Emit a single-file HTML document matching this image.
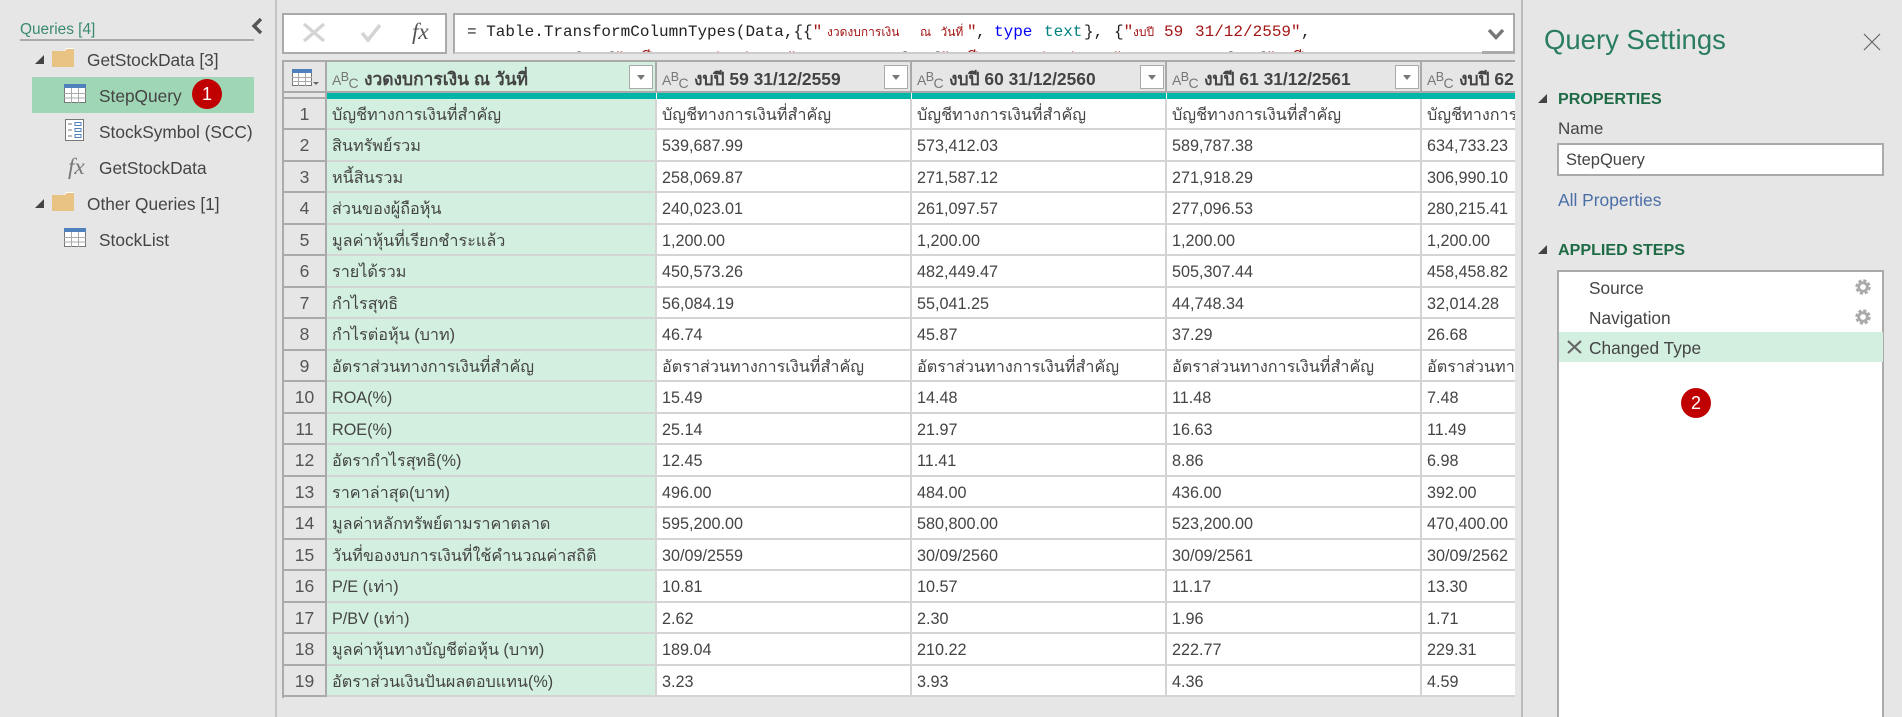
<!DOCTYPE html>
<html><head><meta charset="utf-8"><title>Query Editor</title>
<style>
*{box-sizing:border-box}
html,body{margin:0;padding:0;width:1902px;height:717px;overflow:hidden}
body{background:#e6e6e6;font-family:"Liberation Sans","Noto Sans CJK SC",sans-serif;color:#444}
#page{position:absolute;left:0;top:0;width:1902px;height:717px;overflow:hidden;background:#e6e6e6}
.a{position:absolute;white-space:nowrap}
.t{font-size:17.3px;line-height:22px}
svg{position:absolute;display:block}
.badge{position:absolute;width:30px;height:30px;border-radius:50%;background:#c00000;color:#fff;font-size:18px;line-height:30px;text-align:center}
#grid{position:absolute;left:282px;top:60px;width:1233px;height:638px;overflow:hidden}
.h{position:absolute;top:2px;height:31px;background:#e6e6e6;border-right:2px solid #aaa;font-weight:bold;font-size:17.4px;line-height:34px;white-space:nowrap;overflow:hidden;color:#444}
.abc{position:absolute;top:0;left:5px;font-weight:normal;color:#777;font-size:14px;line-height:36px;letter-spacing:-.6px}
.abc s{text-decoration:none;position:relative;top:-4px;font-size:12.5px}
.abc u{text-decoration:none;position:relative;top:3px;font-size:14px}
.lb{position:absolute;left:37px;top:0}
.fb{position:absolute;top:3px;width:24px;height:24px;background:#fff;border:1px solid #aaa}
.fb:after{content:"";position:absolute;left:7px;top:9px;border:4.5px solid transparent;border-top:5px solid #777;border-bottom:0}
.r{position:absolute;left:0;width:1233px;height:31.5px;font-size:16.2px;line-height:33px}
.r b,.r i{position:absolute;top:0;bottom:0;font-weight:normal;font-style:normal;white-space:nowrap;overflow:hidden;padding-left:5px;border-bottom:2px solid #d4d4d4;border-right:2px solid #d4d4d4;background:#fff}
.r b{left:0;width:45px;line-height:31px;background:#e6e6e6;border-bottom:2px solid #aaa;border-right:2px solid #aaa;border-left:2px solid #aaa;text-align:center;padding:0;font-size:17.5px;color:#555}
.r i:nth-child(2){left:45px;width:330px;background:#d3efe0}
.r i:nth-child(3){left:375px;width:255px}
.r i:nth-child(4){left:630px;width:255px}
.r i:nth-child(5){left:885px;width:255px}
.r i:nth-child(6){left:1140px;width:93px;border-right:0}
.m{position:absolute;font-family:"Liberation Mono","Noto Sans CJK SC",monospace;font-size:16px;line-height:20px;white-space:pre;color:#222}
.red{color:#a31515}.blu{color:#0000ff}.tea{color:#008080}
.sm{font-family:"Liberation Sans","Noto Sans CJK SC",sans-serif;font-size:12px}
</style></head><body><div id="page">

<!-- left panel -->
<div class="a" style="left:20px;top:19px;font-size:15.4px;line-height:22px;color:#3a8a70">Queries [4]</div>
<div class="a" style="left:20px;top:39px;width:234px;height:2px;background:#aaa"></div>
<svg style="left:250px;top:16px" width="14" height="20"><path d="M11 3L4 10l7 7" fill="none" stroke="#555" stroke-width="3.4"/></svg>

<svg style="left:34px;top:54px" width="11" height="11"><path d="M10 1V10H1Z" fill="#444"/></svg>
<svg style="left:52px;top:47px" width="23" height="21"><path d="M0 4H12L14 1H22V20H0Z" fill="#e8c384"/><path d="M12 4L14 1H22V2H14.6L13 4Z" fill="#fff"/></svg>
<div class="a t" style="left:87px;top:49px">GetStockData [3]</div>

<div class="a" style="left:32px;top:77px;width:222px;height:36px;background:#9fd6b5"></div>
<svg style="left:64px;top:84px" width="22" height="19"><rect x=".5" y=".5" width="21" height="18" fill="#fff" stroke="#777"/><rect width="22" height="4" fill="#4f81bd"/><path d="M0 9.5H22M0 14H22M7.5 4V19M14.5 4V19" stroke="#aaa" fill="none"/></svg>
<div class="a t" style="left:99px;top:85px">StepQuery</div>
<div class="badge" style="left:192px;top:79px">1</div>

<svg style="left:65px;top:119px" width="19" height="22"><rect x=".5" y=".5" width="18" height="21" fill="#fff" stroke="#777"/><path d="M3 5H7M3 11H7M3 17H7" stroke="#777"/><path d="M10 3.5h6v3h-6zM10 9.5h6v3h-6zM10 15.5h6v3h-6z" fill="#fff" stroke="#4f81bd"/></svg>
<div class="a t" style="left:99px;top:121px">StockSymbol (SCC)</div>

<div class="a" style="left:68px;top:153px;font-family:'Liberation Serif',serif;font-style:italic;font-size:23px;line-height:28px;color:#777">fx</div>
<div class="a t" style="left:99px;top:157px">GetStockData</div>

<svg style="left:34px;top:198px" width="11" height="11"><path d="M10 1V10H1Z" fill="#444"/></svg>
<svg style="left:52px;top:191px" width="23" height="21"><path d="M0 4H12L14 1H22V20H0Z" fill="#e8c384"/><path d="M12 4L14 1H22V2H14.6L13 4Z" fill="#fff"/></svg>
<div class="a t" style="left:87px;top:193px">Other Queries [1]</div>

<svg style="left:64px;top:228px" width="22" height="19"><rect x=".5" y=".5" width="21" height="18" fill="#fff" stroke="#777"/><rect width="22" height="4" fill="#4f81bd"/><path d="M0 9.5H22M0 14H22M7.5 4V19M14.5 4V19" stroke="#aaa" fill="none"/></svg>
<div class="a t" style="left:99px;top:229px">StockList</div>

<div class="a" style="left:275px;top:0;width:2px;height:717px;background:#c4c4c4"></div>
<div class="a" style="left:1521px;top:0;width:2px;height:717px;background:#bbb"></div>

<!-- formula bar -->
<div class="a" style="left:282px;top:13px;width:165px;height:41px;background:#fff;border:2px solid #aaa"></div>
<svg style="left:302px;top:22px" width="24" height="21"><path d="M2 2L22 19M22 2L2 19" stroke="#d4d4d4" stroke-width="3.4" fill="none"/></svg>
<svg style="left:360px;top:23px" width="22" height="19"><path d="M2 10L8 17L20 2" stroke="#d4d4d4" stroke-width="3.6" fill="none"/></svg>
<div class="a" style="left:412px;top:18px;font-family:'Liberation Serif',serif;font-style:italic;font-size:23px;line-height:28px;color:#555">fx</div>

<div class="a" style="left:453px;top:13px;width:1062px;height:41px;background:#fff;border:2px solid #aaa;border-bottom-color:#ccc;overflow:hidden">
 <span class="m" style="left:12px;top:7px">= Table.TransformColumnTypes(Data,{{<span class="red">"</span></span>
 <span class="m red sm" style="left:372px;top:7px">งวดงบการเงิน</span>
 <span class="m red sm" style="left:465px;top:7px;word-spacing:6px">ณ วันที่</span>
 <span class="m red" style="left:512px;top:7px">"</span><span class="m" style="left:521px;top:7px">,</span>
 <span class="m blu" style="left:539px;top:7px">type</span>
 <span class="m tea" style="left:589px;top:7px">text</span>
 <span class="m" style="left:629px;top:7px">},</span>
 <span class="m" style="left:659px;top:7px">{<span class="red">"</span></span>
 <span class="m red sm" style="left:678px;top:7px">งบปี</span>
 <span class="m red" style="left:709px;top:7px">59</span>
 <span class="m red" style="left:740px;top:7px">31/12/2559"</span><span class="m" style="left:846px;top:7px">,</span>
 <span class="m" style="left:35px;top:34px"><span class="blu">type</span> <span class="tea">text</span>}, {<span class="red">"งบปี 60 31/12/2560"</span>, <span class="blu">type</span> <span class="tea">text</span>}, {<span class="red">"งบปี 61 31/12/2561"</span>, <span class="blu">type</span> <span class="tea">text</span>}, {<span class="red">"งบปี 62</span></span>
</div>
<div class="a" style="left:1482px;top:15px;width:31px;height:37px;background:#fff"></div>
<svg style="left:1487px;top:28px" width="18" height="13"><path d="M2 2L9 9.5L16 2" stroke="#777" stroke-width="3.4" fill="none"/></svg>
<div class="a" style="left:1482px;top:51px;width:33px;height:3px;background:#aaa"></div>

<!-- grid -->
<div id="grid">
 <div class="a" style="left:0;top:0;width:1233px;height:2px;background:#aaa"></div>
 <div class="a" style="left:0;top:2px;width:2px;height:636px;background:#aaa"></div>
 <div class="a" style="left:2px;top:2px;width:43px;height:37px;background:#e6e6e6;border-right:2px solid #aaa"></div>
 <svg style="left:10px;top:9px" width="28" height="17"><rect x=".5" y=".5" width="19" height="16" fill="#fff" stroke="#777"/><rect width="20" height="4" fill="#4f81bd"/><path d="M0 8.5H20M0 12.5H20M6.5 4V17M13.5 4V17" stroke="#aaa" fill="none"/><path d="M21 13H27L24 16Z" fill="#666"/></svg>

 <div class="h" style="left:45px;width:330px;background:#d3efe0"><span class="abc">A<s>B</s><u>C</u></span><span class="lb">งวดงบการเงิน ณ วันที่</span><span class="fb" style="left:302px"></span></div>
 <div class="h" style="left:375px;width:255px"><span class="abc">A<s>B</s><u>C</u></span><span class="lb">งบปี 59 31/12/2559</span><span class="fb" style="left:227px"></span></div>
 <div class="h" style="left:630px;width:255px"><span class="abc">A<s>B</s><u>C</u></span><span class="lb">งบปี 60 31/12/2560</span><span class="fb" style="left:228px"></span></div>
 <div class="h" style="left:885px;width:255px"><span class="abc">A<s>B</s><u>C</u></span><span class="lb">งบปี 61 31/12/2561</span><span class="fb" style="left:228px"></span></div>
 <div class="h" style="left:1140px;width:93px;border-right:0"><span class="abc">A<s>B</s><u>C</u></span><span class="lb">งบปี 62 31/12/2562</span></div>
 <div class="a" style="left:0;top:31px;width:1233px;height:2px;background:#aaa"></div>
 <div class="a" style="left:45px;top:33px;width:1188px;height:6px;background:#00b6a8"></div>
 <div class="a" style="left:374px;top:33px;width:1px;height:6px;background:#fff"></div>
 <div class="a" style="left:629px;top:33px;width:1px;height:6px;background:#fff"></div>
 <div class="a" style="left:884px;top:33px;width:1px;height:6px;background:#fff"></div>
 <div class="a" style="left:2px;top:37px;width:42px;height:2px;background:#aaa"></div>

 <div class="r" style="top:39px;height:31px"><b>1</b><i>บัญชีทางการเงินที่สำคัญ</i><i>บัญชีทางการเงินที่สำคัญ</i><i>บัญชีทางการเงินที่สำคัญ</i><i>บัญชีทางการเงินที่สำคัญ</i><i>บัญชีทางการเงินที่สำคัญ</i></div>
 <div class="r" style="top:70px"><b>2</b><i>สินทรัพย์รวม</i><i>539,687.99</i><i>573,412.03</i><i>589,787.38</i><i>634,733.23</i></div>
 <div class="r" style="top:101.5px"><b>3</b><i>หนี้สินรวม</i><i>258,069.87</i><i>271,587.12</i><i>271,918.29</i><i>306,990.10</i></div>
 <div class="r" style="top:133px"><b>4</b><i>ส่วนของผู้ถือหุ้น</i><i>240,023.01</i><i>261,097.57</i><i>277,096.53</i><i>280,215.41</i></div>
 <div class="r" style="top:164.5px"><b>5</b><i>มูลค่าหุ้นที่เรียกชำระแล้ว</i><i>1,200.00</i><i>1,200.00</i><i>1,200.00</i><i>1,200.00</i></div>
 <div class="r" style="top:196px"><b>6</b><i>รายได้รวม</i><i>450,573.26</i><i>482,449.47</i><i>505,307.44</i><i>458,458.82</i></div>
 <div class="r" style="top:227.5px"><b>7</b><i>กำไรสุทธิ</i><i>56,084.19</i><i>55,041.25</i><i>44,748.34</i><i>32,014.28</i></div>
 <div class="r" style="top:259px"><b>8</b><i>กำไรต่อหุ้น (บาท)</i><i>46.74</i><i>45.87</i><i>37.29</i><i>26.68</i></div>
 <div class="r" style="top:290.5px"><b>9</b><i>อัตราส่วนทางการเงินที่สำคัญ</i><i>อัตราส่วนทางการเงินที่สำคัญ</i><i>อัตราส่วนทางการเงินที่สำคัญ</i><i>อัตราส่วนทางการเงินที่สำคัญ</i><i>อัตราส่วนทางการเงินที่สำคัญ</i></div>
 <div class="r" style="top:322px"><b>10</b><i>ROA(%)</i><i>15.49</i><i>14.48</i><i>11.48</i><i>7.48</i></div>
 <div class="r" style="top:353.5px"><b>11</b><i>ROE(%)</i><i>25.14</i><i>21.97</i><i>16.63</i><i>11.49</i></div>
 <div class="r" style="top:385px"><b>12</b><i>อัตรากำไรสุทธิ(%)</i><i>12.45</i><i>11.41</i><i>8.86</i><i>6.98</i></div>
 <div class="r" style="top:416.5px"><b>13</b><i>ราคาล่าสุด(บาท)</i><i>496.00</i><i>484.00</i><i>436.00</i><i>392.00</i></div>
 <div class="r" style="top:448px"><b>14</b><i>มูลค่าหลักทรัพย์ตามราคาตลาด</i><i>595,200.00</i><i>580,800.00</i><i>523,200.00</i><i>470,400.00</i></div>
 <div class="r" style="top:479.5px"><b>15</b><i>วันที่ของงบการเงินที่ใช้คำนวณค่าสถิติ</i><i>30/09/2559</i><i>30/09/2560</i><i>30/09/2561</i><i>30/09/2562</i></div>
 <div class="r" style="top:511px"><b>16</b><i>P/E (เท่า)</i><i>10.81</i><i>10.57</i><i>11.17</i><i>13.30</i></div>
 <div class="r" style="top:542.5px"><b>17</b><i>P/BV (เท่า)</i><i>2.62</i><i>2.30</i><i>1.96</i><i>1.71</i></div>
 <div class="r" style="top:574px"><b>18</b><i>มูลค่าหุ้นทางบัญชีต่อหุ้น (บาท)</i><i>189.04</i><i>210.22</i><i>222.77</i><i>229.31</i></div>
 <div class="r" style="top:605.5px"><b>19</b><i>อัตราส่วนเงินปันผลตอบแทน(%)</i><i>3.23</i><i>3.93</i><i>4.36</i><i>4.59</i></div>
</div>

<!-- right panel -->
<div class="a" style="left:1544px;top:23px;font-size:27.5px;line-height:34px;color:#2a7d62">Query Settings</div>
<svg style="left:1863px;top:33px" width="18" height="18"><path d="M1 1L17 17M17 1L1 17" stroke="#666" stroke-width="1.2" fill="none"/></svg>

<svg style="left:1537px;top:93px" width="11" height="11"><path d="M10 1V10H1Z" fill="#444"/></svg>
<div class="a" style="left:1558px;top:89px;font-size:16.1px;line-height:20px;font-weight:bold;color:#1e6b45">PROPERTIES</div>
<div class="a" style="left:1558px;top:118px;font-size:17px;line-height:22px">Name</div>
<div class="a" style="left:1557px;top:143px;width:327px;height:33px;background:#fff;border:2px solid #aaa;font-size:16.5px;line-height:31px;padding-left:7px">StepQuery</div>
<div class="a" style="left:1558px;top:189px;font-size:17.4px;line-height:22px;color:#4a6ea6">All Properties</div>

<svg style="left:1537px;top:244px" width="11" height="11"><path d="M10 1V10H1Z" fill="#444"/></svg>
<div class="a" style="left:1558px;top:240px;font-size:16.1px;line-height:20px;font-weight:bold;color:#1e6b45">APPLIED STEPS</div>

<div class="a" style="left:1557px;top:270px;width:327px;height:447px;background:#fff;border:2px solid #aaa;border-bottom:0"></div>
<div class="a t" style="left:1589px;top:277px">Source</div>
<svg style="left:1855px;top:279px" width="16" height="16"><circle cx="8" cy="8" r="4.3" fill="none" stroke="#aaa" stroke-width="2.8"/><circle cx="8" cy="8" r="6.6" fill="none" stroke="#aaa" stroke-width="2.2" stroke-dasharray="3.2 2"/></svg>
<div class="a t" style="left:1589px;top:307px">Navigation</div>
<svg style="left:1855px;top:309px" width="16" height="16"><circle cx="8" cy="8" r="4.3" fill="none" stroke="#aaa" stroke-width="2.8"/><circle cx="8" cy="8" r="6.6" fill="none" stroke="#aaa" stroke-width="2.2" stroke-dasharray="3.2 2"/></svg>
<div class="a" style="left:1559px;top:332px;width:324px;height:30px;background:#d3efe0"></div>
<svg style="left:1566px;top:340px" width="17" height="14"><path d="M2 1L15 13M15 1L2 13" stroke="#666" stroke-width="2.2" fill="none"/></svg>
<div class="a t" style="left:1589px;top:337px">Changed Type</div>
<div class="badge" style="left:1681px;top:388px">2</div>
</div></body></html>
